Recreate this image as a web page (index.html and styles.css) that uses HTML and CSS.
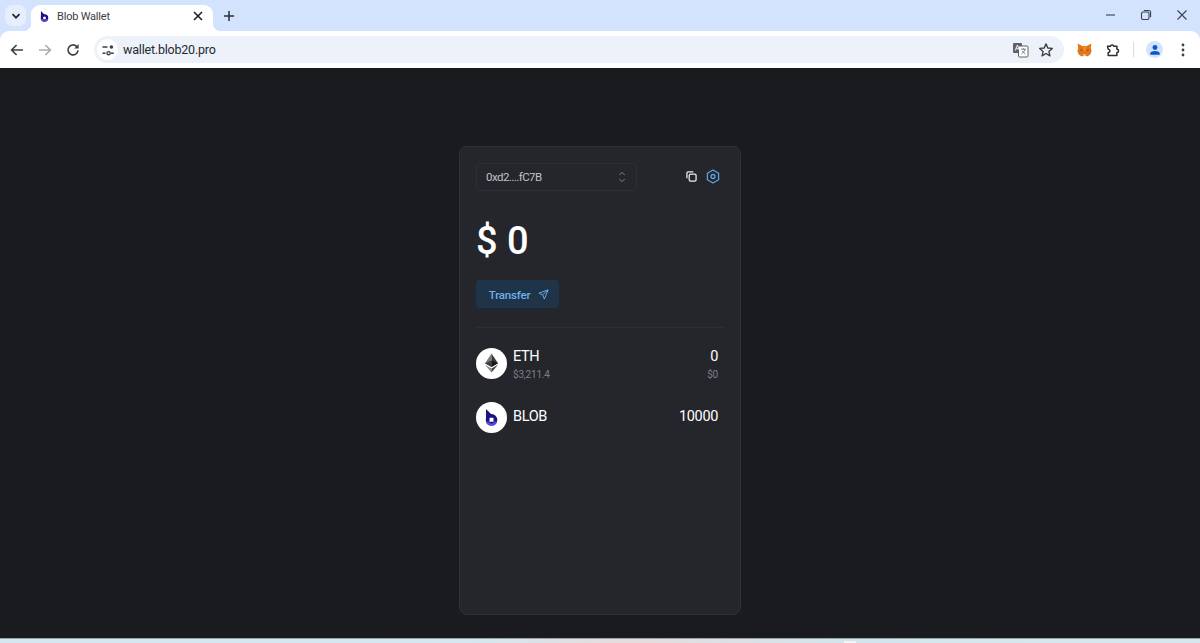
FILE: index.html
```html
<!DOCTYPE html>
<html lang="en">
<head>
<meta charset="utf-8">
<title>Blob Wallet</title>
<link rel="stylesheet" href="styles.css">
</head>
<body>
<div class="browser">
  <div class="tabstrip">
    <button class="tab-search">
      <svg width="12" height="12" viewBox="0 0 12 12"><path d="M2.5 4.2 6 7.7l3.5-3.5" fill="none" stroke="#1f2a3a" stroke-width="1.8"/></svg>
    </button>
    <div class="tab">
      <svg class="favicon" width="9" height="11" viewBox="0 0 13 17"><circle cx="6.500" cy="10.800" r="5.800" fill="#1b1480"/><path d="M1 0 7 6 1 11z" fill="#1b1480"/><path d="M.9 12.500a5.800 5.800 0 0 0 11.200 0H9a2.600 2.600 0 0 1-5 0z" fill="#5a45e0"/><rect x="4.500" y="8.800" width="4" height="4" rx=".6" fill="#fff"/></svg>
      <span class="tab-title">Blob Wallet</span>
      <svg class="tab-close" width="12" height="12" viewBox="0 0 12 12"><path d="M2 2l8 8M10 2l-8 8" stroke="#1f1f1f" stroke-width="1.6"/></svg>
    </div>
    <svg class="new-tab" width="14" height="14" viewBox="0 0 14 14"><path d="M7 2v10M2 7h10" stroke="#2a2f38" stroke-width="1.5"/></svg>
    <div class="window-controls">
      <svg width="12" height="12" viewBox="0 0 12 12"><path d="M2 6h9" stroke="#3a4150" stroke-width="1.100"/></svg>
      <svg width="12" height="12" viewBox="0 0 12 12"><rect x="1.500" y="3" width="7.500" height="7.500" rx="1.500" fill="none" stroke="#3a4150" stroke-width="1.100"/><path d="M3.800 1.500h5a1.800 1.800 0 0 1 1.800 1.800v5" fill="none" stroke="#3a4150" stroke-width="1.100"/></svg>
      <svg width="12" height="12" viewBox="0 0 12 12"><path d="M1.500 1.500l9 9M10.500 1.500l-9 9" stroke="#3a4150" stroke-width="1.100"/></svg>
    </div>
  </div>
  <div class="toolbar">
    <div class="nav">
      <svg width="16" height="16" viewBox="0 0 16 16"><path d="M14 8H2.800M7.600 3 2.600 8l5 5" fill="none" stroke="#3c4043" stroke-width="1.600"/></svg>
      <svg width="16" height="16" viewBox="0 0 16 16"><path d="M2 8h11.200M8.400 3l5 5-5 5" fill="none" stroke="#a9adb3" stroke-width="1.600"/></svg>
      <svg width="16" height="16" viewBox="0 0 16 16"><path d="M13 8.400A5 5 0 1 1 11.500 4.300L13 5.600" fill="none" stroke="#3c4043" stroke-width="1.600"/><path d="M13.600 2v4.400H9.200z" fill="#3c4043"/></svg>
    </div>
    <div class="omnibox">
      <span class="site-chip">
        <svg width="14" height="14" viewBox="0 0 14 14"><path d="M1.500 4h5M1.500 10.200h3" stroke="#3c4043" stroke-width="1.500"/><circle cx="10.400" cy="4" r="1.800" fill="#3c4043"/><circle cx="7.600" cy="10.200" r="1.600" fill="none" stroke="#3c4043" stroke-width="1.400"/><path d="M10 10.200h2.800" stroke="#3c4043" stroke-width="1.500"/></svg>
      </span>
      <span class="url">wallet.blob20.pro</span>
      <svg class="omni-icon" width="17" height="17" viewBox="0 0 17 17"><rect x="1" y="2" width="9" height="10" rx="1" fill="#5f6368"/><rect x="6.500" y="5" width="9.500" height="11" rx="1" fill="#fff" stroke="#5f6368" stroke-width="1"/><path d="M9 8.200h5M11.500 7.200v1M13 8.400c-.6 2.200-2 3.600-3.600 4.400M10.200 9.800c.7 1.300 1.700 2.200 3.200 3" fill="none" stroke="#5f6368" stroke-width=".8"/><path d="M3.200 9.500 5.400 4l2.200 5.500M4 7.800h2.800" fill="none" stroke="#fff" stroke-width=".9"/></svg>
      <svg class="omni-icon star" width="16" height="16" viewBox="0 0 16 16"><path d="M8 1.900 9.800 6l4.500.4-3.400 3 1 4.400L8 11.500l-3.900 2.300 1-4.400-3.400-3L6.200 6z" fill="none" stroke="#3c4043" stroke-width="1.400" stroke-linejoin="round"/></svg>
    </div>
    <div class="actions">
      <svg class="fox" width="15" height="14" viewBox="0 0 15 14"><path d="M.6.600 5.300 3h4.400L14.400.6l-.6 4.400.8 3.200-1.500 3.600-3 1.600-1.800-1H6.700l-1.800 1-3-1.600L.4 8.200l.8-3.200z" fill="#e2761b"/><path d="M3 6l2.400 1-1 1.300zM12 6 9.600 7l1 1.300z" fill="#7a4a20"/><path d="M6 11h3l-.6 1.700H6.600z" fill="#d7c1b3"/><path d="M5.300 3h4.400L8.600 8H6.400z" fill="#f6851b"/></svg>
      <svg class="puzzle" width="16" height="16" viewBox="0 0 16 16"><path d="M2.500 4.200h2.800a1.900 1.900 0 0 1 3.600 0h3v3a1.700 1.700 0 0 1 0 3.400v3H3.200v-3a1.700 1.700 0 0 0 0-3.400z" fill="none" stroke="#2b2f36" stroke-width="1.500" stroke-linejoin="round"/></svg>
      <span class="action-sep"></span>
      <span class="avatar">
        <svg width="14" height="14" viewBox="0 0 14 14"><circle cx="7" cy="4" r="2.900" fill="#0b57d0"/><path d="M1.500 12.500V11c0-1.800 3-2.800 5.500-2.800s5.500 1 5.500 2.800v1.500z" fill="#0b57d0"/></svg>
      </span>
      <svg class="menu" width="4" height="14" viewBox="0 0 4 14"><circle cx="2" cy="2" r="1.400" fill="#3c4043"/><circle cx="2" cy="7" r="1.400" fill="#3c4043"/><circle cx="2" cy="12" r="1.400" fill="#3c4043"/></svg>
    </div>
  </div>
</div>
<main class="page">
  <section class="card">
    <header class="card-head">
      <div class="select">
        <span>0xd2....fC7B</span>
        <svg width="10" height="14" viewBox="0 0 10 14"><path d="M2.300 5 5 2.300 7.700 5M2.300 9 5 11.700 7.700 9" fill="none" stroke="#7b7f88" stroke-width="1"/></svg>
      </div>
      <div class="head-icons">
        <svg width="11" height="11" viewBox="0 0 12 12"><rect x="3.500" y="3.500" width="7.500" height="7.500" rx="1.500" fill="none" stroke="#eceef1" stroke-width="1.400"/><path d="M1 8V2.500A1.500 1.500 0 0 1 2.500 1H8" fill="none" stroke="#eceef1" stroke-width="1.400"/></svg>
        <svg width="14" height="15" viewBox="0 0 14 15"><path d="M7 1l5.600 3.200v6.600L7 14l-5.600-3.200V4.200z" fill="none" stroke="#5ea3de" stroke-width="1.300" stroke-linejoin="round"/><circle cx="7" cy="7.500" r="2" fill="none" stroke="#5ea3de" stroke-width="1.300"/></svg>
      </div>
    </header>
    <div class="balance">$ 0</div>
    <button class="transfer">
      <span class="transfer-label">Transfer</span>
      <svg width="11" height="11" viewBox="0 0 12 12"><path d="M11 1 1 4.500l4 2 2 4.500zM11 1 5 6.500" fill="none" stroke="#6db0ea" stroke-width="1" stroke-linejoin="round"/></svg>
    </button>
    <hr class="divider">
    <ul class="tokens">
      <li class="token">
        <span class="token-icon">
          <svg width="13" height="20" viewBox="0 0 18 26"><path d="M9 0 0 13.300 9 18.500z" fill="#7d7d7d"/><path d="M9 0l9 13.300L9 18.500z" fill="#3a3a3a"/><path d="M0 13.300 9 9.500v9z" fill="#3f3f3f"/><path d="M18 13.300 9 9.500v9z" fill="#181818"/><path d="M0 15.500 9 26v-5.500z" fill="#8a8a8a"/><path d="M18 15.500 9 26v-5.500z" fill="#444"/></svg>
        </span>
        <div class="token-name">
          <div class="symbol">ETH</div>
          <div class="sub">$3,211.4</div>
        </div>
        <div class="token-value">
          <div class="amount">0</div>
          <div class="sub">$0</div>
        </div>
      </li>
      <li class="token">
        <span class="token-icon">
          <svg width="13" height="17" viewBox="0 0 13 17"><circle cx="6.500" cy="10.800" r="5.800" fill="#1b1480"/><path d="M1 0 7 6 1 11z" fill="#1b1480"/><path d="M.9 12.500a5.800 5.800 0 0 0 11.200 0H9a2.600 2.600 0 0 1-5 0z" fill="#5a45e0"/><rect x="4.500" y="8.800" width="4" height="4" rx=".6" fill="#fff"/></svg>
        </span>
        <div class="token-name">
          <div class="symbol">BLOB</div>
        </div>
        <div class="token-value">
          <div class="amount">10000</div>
        </div>
      </li>
    </ul>
  </section>
</main>
<div class="taskbar-edge"><span class="taskbar-tab"></span></div>
</body>
</html>
```
FILE: styles.css
```css
* { box-sizing: border-box; }
html, body { margin: 0; height: 100%; }
body {
  display: flex;
  flex-direction: column;
  height: 643px;
  overflow: hidden;
  background: #1a1b1e;
  font-family: Roboto, "Noto Sans", "Liberation Sans", sans-serif;
}
svg { display: block; flex: none; }

/* browser chrome */
.browser { flex: none; height: 68px; background: #d3e3fd; }
.tabstrip { height: 31px; display: flex; align-items: flex-end; padding-left: 5px; }
.tab-search {
  width: 21px; height: 21px; margin-bottom: 5px; padding: 0;
  border: 0; border-radius: 7px; background: #e6eefb;
  display: flex; align-items: center; justify-content: center;
}
.tab {
  position: relative;
  width: 182px; height: 26px; margin-left: 5px; padding: 0 8px 4px 9px;
  background: #fff; border-radius: 9px 9px 0 0;
  display: flex; align-items: center;
}
.tab::before, .tab::after {
  content: ""; position: absolute; bottom: 0; width: 8px; height: 8px;
}
.tab::before { left: -8px; background: radial-gradient(circle at 0 0, transparent 8px, #fff 8.500px); }
.tab::after { right: -8px; background: radial-gradient(circle at 100% 0, transparent 8px, #fff 8.500px); }
.favicon { margin-right: 8px; }
.tab-title { flex: 1; font-size: 11px; color: #3c4043; letter-spacing: -.2px; }
.tab-close { margin-right: 1px; }
.new-tab { margin: 0 0 8px 9px; }
.window-controls {
  margin-left: auto; margin-bottom: 10px; padding-right: 12px;
  display: flex; gap: 24px; align-self: flex-end;
}
.toolbar {
  height: 37px; background: #fff; border-radius: 9px 9px 0 0;
  display: flex; align-items: center; padding-left: 9px;
}
.nav { display: flex; gap: 12px; width: 85px; }
.omnibox {
  width: 970px; height: 27px; border-radius: 14px; background: #edf2fa;
  display: flex; align-items: center; padding: 0 10px 0 3px;
}
.site-chip {
  width: 21px; height: 21px; border-radius: 50%; background: #fff;
  display: flex; align-items: center; justify-content: center; margin-right: 5px;
}
.url { flex: 1; font-size: 12.500px; letter-spacing: -.2px; color: #26292e; }
.omni-icon.star { margin-left: 9px; }
.actions { flex: 1; display: flex; align-items: center; padding-left: 13px; }
.puzzle { margin-left: 13px; }
.action-sep { width: 1px; height: 15px; background: #dadce0; margin: 0 13px 0 12px; }
.avatar {
  width: 17px; height: 17px; margin-left: -1px; border-radius: 50%; background: #d3e3fd;
  display: flex; align-items: center; justify-content: center;
}
.avatar svg { width: 12px; height: 12px; }
.menu { margin-left: 18px; }

/* page */
.page {
  flex: 1; min-height: 0; padding-top: 78px;
  display: flex; justify-content: center; align-items: flex-start;
  background: #1a1b1e;
}
.card {
  width: 282px; height: 469px; padding: 16px;
  background: #25262b; border: 1px solid #2f3036; border-radius: 8px;
  color: #fff;
}
.card-head { display: flex; align-items: center; justify-content: space-between; padding-right: 4px; }
.select {
  width: 161px; height: 28px; padding: 0 9px;
  border: 1px solid #2e2f35; border-radius: 4px;
  display: flex; align-items: center; justify-content: space-between;
  font-size: 11.500px; letter-spacing: -.55px; color: #c1c2c5;
}
.head-icons { display: flex; align-items: center; gap: 9px; padding-bottom: 1px; }
.balance { margin-top: 22px; height: 56px; line-height: 56px; font-size: 38px; font-weight: 500; }
.transfer {
  margin-top: 11px; width: 83px; height: 28px; padding: 0 0 0 3px;
  border: 0; border-radius: 4px; background: #1f3449; color: #6db0ea;
  font: 500 11.500px Roboto, "Noto Sans", sans-serif;
  letter-spacing: -.2px;
  display: flex; align-items: center; justify-content: center; gap: 8px;
}
.transfer-label { padding-top: 2px; }
.divider { margin: 19px 0 0; border: 0; border-top: 1px solid #2d2e34; }
.tokens { list-style: none; margin: 19px 0 0; padding: 0 6px 0 0; display: flex; flex-direction: column; gap: 22px; }
.token { height: 32px; display: flex; align-items: center; }
.token-icon {
  width: 31px; height: 31px; border-radius: 50%; background: #fff;
  display: flex; align-items: center; justify-content: center;
  margin-right: 6px;
}
.token-name { flex: 1; }
.token-value { text-align: right; }
.symbol, .amount { font-size: 14.500px; line-height: 22px; letter-spacing: -.35px; color: #fff; }
.sub { font-size: 10px; line-height: 12px; padding-top: 1px; letter-spacing: -.2px; color: #7c7f86; }
.taskbar-edge {
  flex: none; height: 5px; display: flex; align-items: flex-end; padding-left: 844px;
  border-top: 1px solid #9aa6ab;
  background: linear-gradient(90deg, #d5e8f0 0, #d5e6ee 40%, #e6dcdc 52%, #d3e5ec 70%, #d7e7ee 100%);
}
.taskbar-tab { width: 12px; height: 2px; background: #f1f4f6; }
```
